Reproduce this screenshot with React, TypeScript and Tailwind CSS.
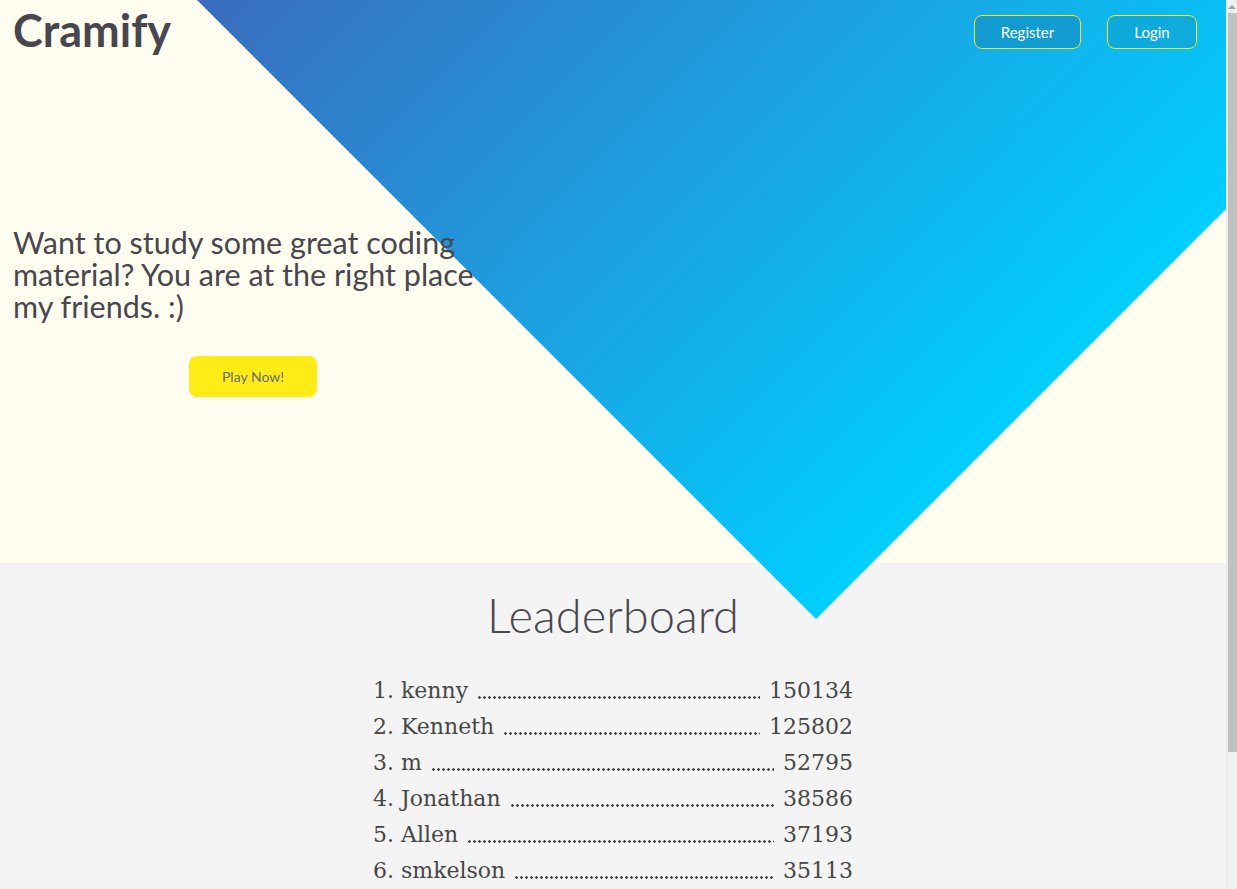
import type { FC } from "react";

type player = {
  rank: number;
  name: string;
  score: number;
};

const players: player[] = [
  { rank: 1, name: "kenny", score: 150134 },
  { rank: 2, name: "Kenneth", score: 125802 },
  { rank: 3, name: "m", score: 52795 },
  { rank: 4, name: "Jonathan", score: 38586 },
  { rank: 5, name: "Allen", score: 37193 },
  { rank: 6, name: "smkelson", score: 35113 },
];

const Backdrop: FC = () => (
  <svg className="absolute left-0 top-0 w-[1226px] h-[620px] pointer-events-none" viewBox="0 0 1226 620">
    <defs>
      <linearGradient id="bluey" gradientUnits="userSpaceOnUse" x1="197" y1="0" x2="815.5" y2="618.5">
        <stop offset="0" stopColor="#3a6cbd" />
        <stop offset="1" stopColor="#00cfff" />
      </linearGradient>
    </defs>
    <polygon points="197,0 816,619 1435,0" fill="url(#bluey)" />
  </svg>
);

// browser scrollbar, as seen in the shot
const Scrollbar: FC = () => (
  <aside className="fixed right-0 top-0 h-screen w-[11px] bg-[#f0f0f0] border-l border-[#e8e8e8]">
    <svg className="absolute left-[1px] top-[4px]" width="8" height="6" viewBox="0 0 8 6">
      <polygon points="4,1 8,5 0,5" fill="#a3a3a3" />
    </svg>
    <div className="absolute left-[1px] right-0 top-[13px] h-[739px] bg-[#c1c1c1]" />
  </aside>
);

const App: FC = () => {
  return (
    <div className="min-h-screen bg-[#f4f4f4]">
      <main className="w-[1226px] font-['Lato',sans-serif] text-[#48474f]">
        <section className="relative h-[563px] bg-[#fffdf0]">
          <Backdrop />
          <div className="relative z-10">
            <nav className="flex justify-between items-start pl-[13px] pr-[29px]">
              <h1 className="text-[45px] font-bold leading-[60px]">Cramify</h1>
              <div className="flex gap-[26px] pt-[15px]">
                <button className="w-[107px] h-[34px] rounded-lg border border-[#f5e61a] bg-[#1396c9]/80 text-white text-[15px]">
                  Register
                </button>
                <button className="w-[90px] h-[34px] rounded-lg border border-[#f5e61a] bg-[#0fa6d6]/80 text-white text-[15px]">
                  Login
                </button>
              </div>
            </nav>
            <div className="w-[480px] ml-[13px] mt-[166px]">
              <p className="text-[30.5px] leading-[32px]">
                Want to study some great coding material? You are at the right place my friends. :)
              </p>
              <div className="flex justify-center mt-[34px]">
                <button className="w-[128px] h-[41px] rounded-lg bg-[#ffec17] text-[#6b6b6b] text-[14px]">
                  Play Now!
                </button>
              </div>
            </div>
          </div>
        </section>
        <section className="flex flex-col items-center pt-[24px] pb-[160px]">
          <h2 className="text-[47px] font-light leading-[56px]">Leaderboard</h2>
          <ol className="w-[480px] mt-[32px] font-['DejaVu_Serif',serif] text-[22px] text-[#474747]">
            {players.map((p) => (
              <li key={p.rank} className="flex items-end h-[36px] pb-[6px]">
                <span className="leading-[28px]">
                  {p.rank}. {p.name}
                </span>
                <span className="flex-1 mx-[9px] mb-[6px] h-[3px] bg-[radial-gradient(circle,#474747_1.2px,transparent_1.5px)] bg-[length:5px_3px] bg-repeat-x" />
                <span className="leading-[28px]">{p.score}</span>
              </li>
            ))}
          </ol>
        </section>
      </main>
      <Scrollbar />
    </div>
  );
};

export default App;
